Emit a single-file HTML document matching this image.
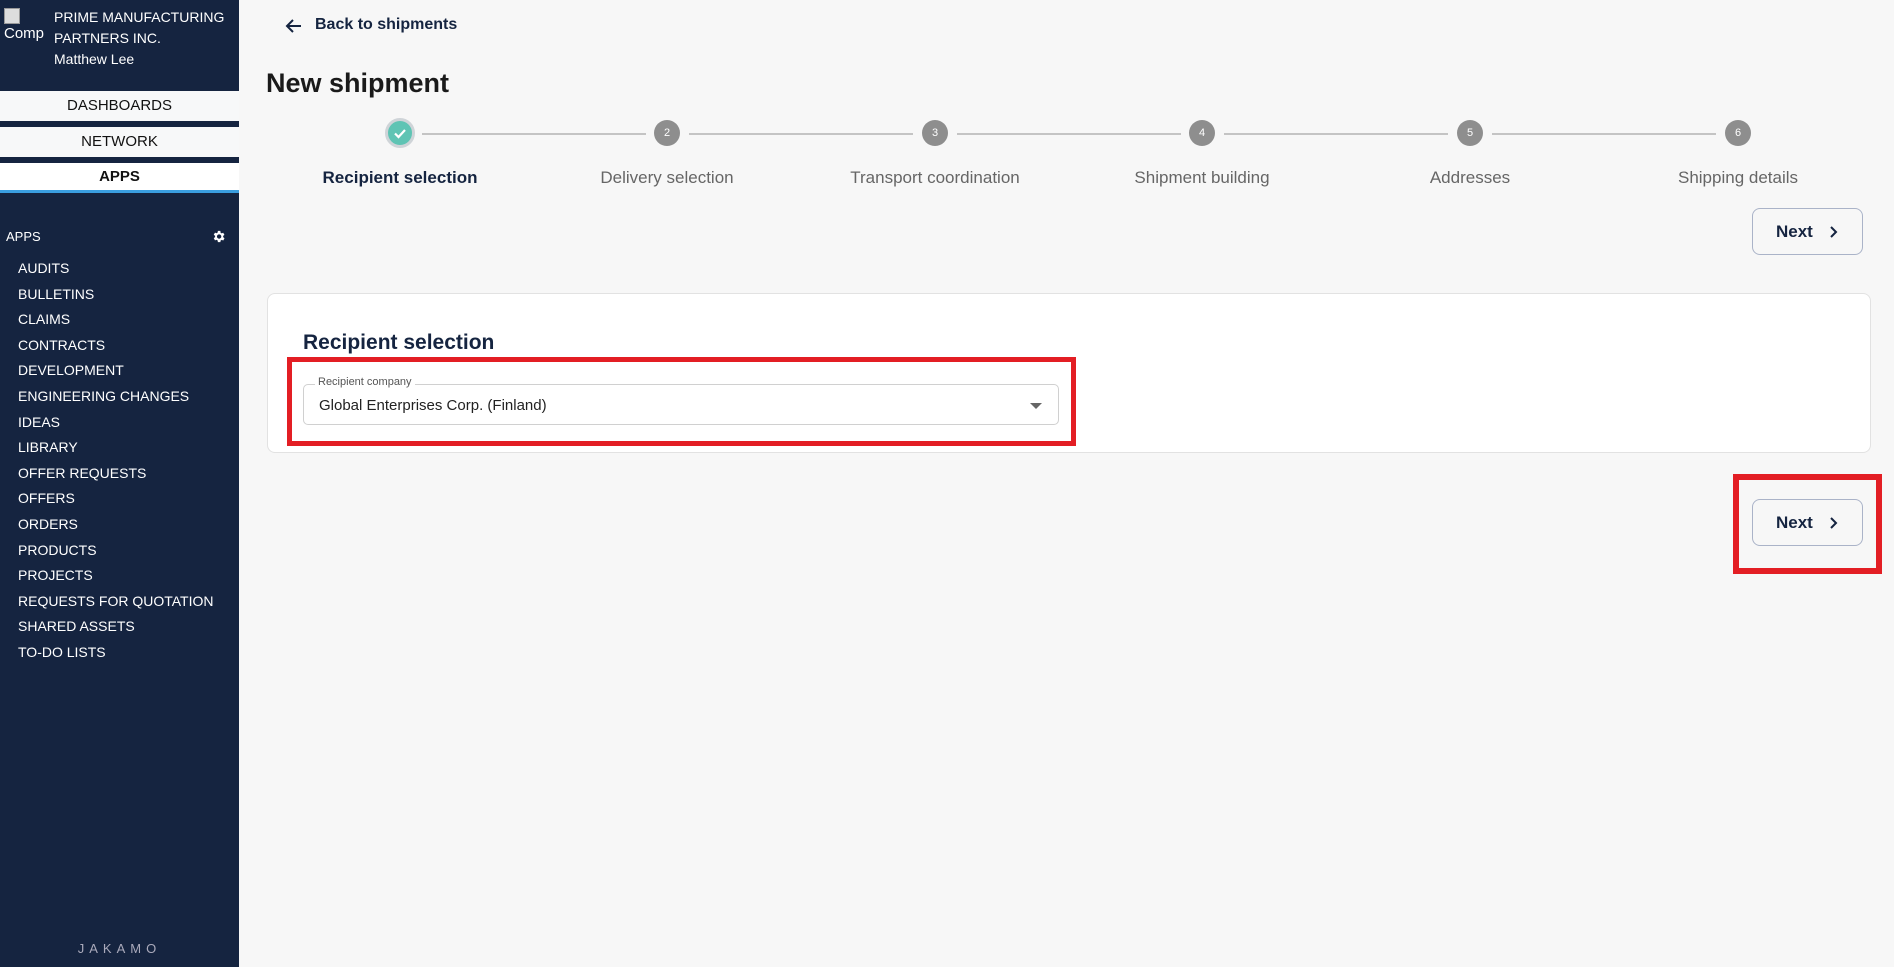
<!DOCTYPE html>
<html><head><style>
*{margin:0;padding:0;box-sizing:border-box}
body{width:1894px;height:967px;background:#f7f7f7;font-family:"Liberation Sans",sans-serif;position:relative;overflow:hidden}
.sb{position:absolute;left:0;top:0;width:239px;height:967px;background:#152440;color:#fff}
.abs{position:absolute}
.nav{position:absolute;left:0;width:239px;background:#f7f8f9;color:#111;text-align:center;font-size:15px}
.item{position:absolute;left:18px;font-size:14px;color:#fff;line-height:16px}
.step{position:absolute;width:26px;height:26px;border-radius:50%;background:#8e8e8e;color:#fff;font-size:11px;text-align:center;line-height:26px;top:120px}
.line{position:absolute;top:133px;height:2px;background:#c4c4c4}
.lbl{position:absolute;top:168px;font-size:17px;color:#666;transform:translateX(-50%);white-space:nowrap}
.btn{position:absolute;left:1752px;width:111px;height:47px;border:1px solid #aab3c8;border-radius:8px;background:#f7f7f7;color:#152440;font-weight:bold;font-size:17px;line-height:45px;padding-left:23px}
.btn svg{position:absolute;right:24px;top:17px}
</style></head><body>
<div class="sb">
 <div class="abs" style="left:4px;top:8px;width:16px;height:16px;border:1px solid #999;background:#ddd"></div>
 <div class="abs" style="left:4px;top:25px;font-size:15px;width:42px;overflow:hidden">Comp</div>
 <div class="abs" style="left:54px;top:7px;font-size:14px;line-height:21px">PRIME MANUFACTURING<br>PARTNERS INC.</div>
 <div class="abs" style="left:54px;top:51px;font-size:14px">Matthew Lee</div>
 <div class="nav" style="top:91px;height:30px;line-height:30px">DASHBOARDS</div>
 <div class="nav" style="top:127px;height:30px;line-height:30px">NETWORK</div>
 <div class="nav" style="top:163px;height:27px;line-height:28px;background:#fff;font-weight:bold">APPS</div>
 <div class="abs" style="left:0;top:190px;width:239px;height:3px;background:#3a9ee0"></div>
 <div class="abs" style="left:6px;top:229px;font-size:13px">APPS</div>
 <svg class="abs" style="left:211px;top:229px" width="15" height="15" viewBox="0 0 24 24"><path fill="#fff" d="M19.4 13a7.5 7.5 0 0 0 0-2l2.1-1.6-2-3.5-2.5 1a7 7 0 0 0-1.7-1L15 3h-4l-.4 2.7a7 7 0 0 0-1.700 1l-2.5-1-2 3.5L6.6 11a7.5 7.5 0 0 0 0 2l-2.2 1.6 2 3.5 2.5-1a7 7 0 0 0 1.7 1L11 21h4l.4-2.7a7 7 0 0 0 1.7-1l2.5 1 2-3.5zM13 15.5a3.5 3.5 0 1 1 0-7 3.5 3.5 0 0 1 0 7z"/></svg>
 <div class="item" style="top:260px">AUDITS</div>
 <div class="item" style="top:286px">BULLETINS</div>
 <div class="item" style="top:311px">CLAIMS</div>
 <div class="item" style="top:337px">CONTRACTS</div>
 <div class="item" style="top:362px">DEVELOPMENT</div>
 <div class="item" style="top:388px">ENGINEERING CHANGES</div>
 <div class="item" style="top:414px">IDEAS</div>
 <div class="item" style="top:439px">LIBRARY</div>
 <div class="item" style="top:465px">OFFER REQUESTS</div>
 <div class="item" style="top:490px">OFFERS</div>
 <div class="item" style="top:516px">ORDERS</div>
 <div class="item" style="top:542px">PRODUCTS</div>
 <div class="item" style="top:567px">PROJECTS</div>
 <div class="item" style="top:593px">REQUESTS FOR QUOTATION</div>
 <div class="item" style="top:618px">SHARED ASSETS</div>
 <div class="item" style="top:644px">TO-DO LISTS</div>
 <div class="abs" style="left:0;width:239px;top:941px;text-align:center;font-size:13px;letter-spacing:5px;color:#aab">JAKAMO</div>
</div>

<svg class="abs" style="left:285px;top:18px" width="18" height="16" viewBox="0 0 18 16"><path d="M16 8H3M8 2L2 8l6 6" stroke="#152440" stroke-width="2" fill="none"/></svg>
<div class="abs" style="left:315px;top:16px;font-size:16px;font-weight:bold;color:#152440">Back to shipments</div>
<div class="abs" style="left:266px;top:68px;font-size:27px;font-weight:bold;color:#1a1a1a">New shipment</div>

<div class="step" style="left:385px;top:118px;width:30px;height:30px;background:#5fc4b4;border:3px solid #cfd4d8"><svg width="24" height="24" viewBox="0 0 24 24" style="position:absolute;left:0;top:0"><path d="M7 12.5l3.5 3.5L17 9" stroke="#fff" stroke-width="2.2" fill="none"/></svg></div>
<div class="line" style="left:422px;width:224px"></div>
<div class="step" style="left:654px">2</div>
<div class="line" style="left:689px;width:224px"></div>
<div class="step" style="left:922px">3</div>
<div class="line" style="left:957px;width:224px"></div>
<div class="step" style="left:1189px">4</div>
<div class="line" style="left:1224px;width:224px"></div>
<div class="step" style="left:1457px">5</div>
<div class="line" style="left:1492px;width:224px"></div>
<div class="step" style="left:1725px">6</div>
<div class="lbl" style="left:400px;color:#152440;font-weight:bold">Recipient selection</div>
<div class="lbl" style="left:667px">Delivery selection</div>
<div class="lbl" style="left:935px">Transport coordination</div>
<div class="lbl" style="left:1202px">Shipment building</div>
<div class="lbl" style="left:1470px">Addresses</div>
<div class="lbl" style="left:1738px">Shipping details</div>

<div class="btn" style="top:208px">Next<svg width="10" height="12" viewBox="0 0 10 12"><path d="M3 1l5 5-5 5" stroke="#152440" stroke-width="2" fill="none"/></svg></div>

<div class="abs" style="left:267px;top:293px;width:1604px;height:160px;background:#fff;border:1px solid #e2e2e2;border-radius:8px"></div>
<div class="abs" style="left:303px;top:331px;font-size:21px;font-weight:bold;color:#152440">Recipient selection</div>
<div class="abs" style="left:303px;top:384px;width:756px;height:41px;border:1px solid #d0d0d0;border-radius:5px;background:#fff"></div>
<div class="abs" style="left:315px;top:376px;font-size:11px;color:#555;background:#fff;padding:0 3px">Recipient company</div>
<div class="abs" style="left:319px;top:397px;font-size:15px;color:#222">Global Enterprises Corp. (Finland)</div>
<div class="abs" style="left:1030px;top:403px;width:0;height:0;border-left:6px solid transparent;border-right:6px solid transparent;border-top:6px solid #666"></div>
<div class="abs" style="left:287px;top:357px;width:789px;height:89px;border:5px solid #e31e24"></div>

<div class="btn" style="top:499px">Next<svg width="10" height="12" viewBox="0 0 10 12"><path d="M3 1l5 5-5 5" stroke="#152440" stroke-width="2" fill="none"/></svg></div>
<div class="abs" style="left:1733px;top:474px;width:149px;height:100px;border:6px solid #e31e24"></div>
</body></html>
